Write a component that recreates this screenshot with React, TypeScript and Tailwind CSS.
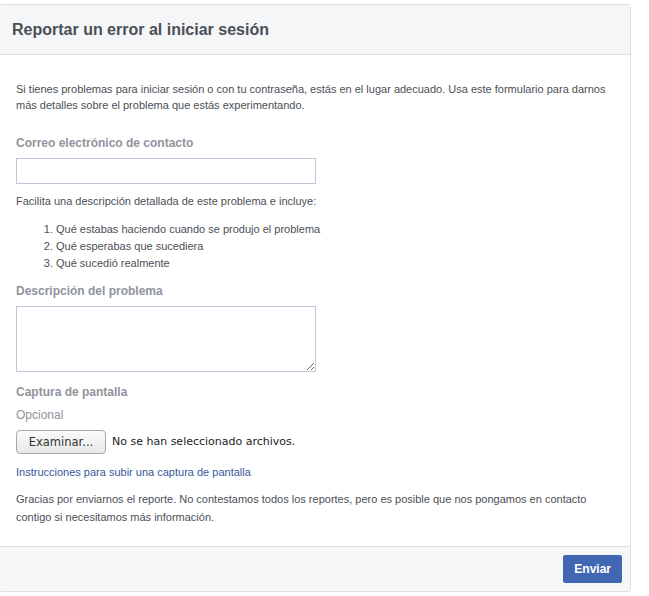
import React from "react";

export default function App() {
  return (
    <div className="min-h-screen bg-white pt-1 font-['Liberation_Sans',Arial,sans-serif] text-[#4b4f56]">
      <div className="-ml-px w-[632px] rounded-[3px] border border-[#dddfe2] bg-white">
        {/* Header */}
        <div className="flex h-[50px] items-center border-b border-[#dddfe2] bg-[#f5f6f7] px-3">
          <h2 className="text-[16px] font-bold text-[#4b4f56]">Reportar un error al iniciar sesión</h2>
        </div>

        {/* Body */}
        <div className="px-4 pb-5 pt-[26px] text-[11px] leading-4">
          <p>
            Si tienes problemas para iniciar sesión o con tu contraseña, estás en el lugar adecuado. Usa este formulario para darnos más detalles sobre el problema que estás experimentando.
          </p>

          <label className="mt-[22px] block text-[12px] font-bold text-[#90949c]">Correo electrónico de contacto</label>
          <input type="text" className="mt-[7px] block h-[26px] w-[300px] border border-[#bdc7d8] px-1 text-[12px] outline-none" />

          <p className="mt-[9px]">Facilita una descripción detallada de este problema e incluye:</p>
          <ol className="mt-[12px] list-decimal pl-[40px] leading-[17px]">
            <li>Qué estabas haciendo cuando se produjo el problema</li>
            <li>Qué esperabas que sucediera</li>
            <li>Qué sucedió realmente</li>
          </ol>

          <label className="mt-[11px] block text-[12px] font-bold text-[#90949c]">Descripción del problema</label>
          <textarea className="mt-[7px] block h-[66px] w-[300px] border border-[#bdc7d8] px-1 text-[12px] outline-none" />

          <label className="mt-3 block text-[12px] font-bold text-[#90949c]">Captura de pantalla</label>
          <div className="mt-[7px] text-[12px] text-[#90949c]">Opcional</div>
          <div className="mt-[7px] flex items-center gap-[6px] text-[#222]">
            <span className="flex h-[24px] w-[90px] items-center justify-center rounded-[4px] border border-[#a8a8a8] bg-gradient-to-b from-[#fbfbfb] to-[#e8e8e8] font-['DejaVu_Sans',sans-serif] text-[11.5px] text-[#333]">
              Examinar...
            </span>
            <span className="font-['DejaVu_Sans',sans-serif] text-[11px]">No se han seleccionado archivos.</span>
          </div>

          <a href="#" className="mt-[10px] block text-[#365899]">Instrucciones para subir una captura de pantalla</a>

          <p className="mt-[10px] leading-[18px]">
            Gracias por enviarnos el reporte. No contestamos todos los reportes, pero es posible que nos pongamos en contacto contigo si necesitamos más información.
          </p>
        </div>

        {/* Footer */}
        <div className="flex justify-end border-t border-[#dddfe2] bg-[#f5f6f7] px-2 py-2">
          <button className="h-[28px] rounded-[2px] border border-[#4267b2] bg-[#4267b2] px-[10px] text-[12px] font-bold text-white">
            Enviar
          </button>
        </div>
      </div>
    </div>
  );
}
